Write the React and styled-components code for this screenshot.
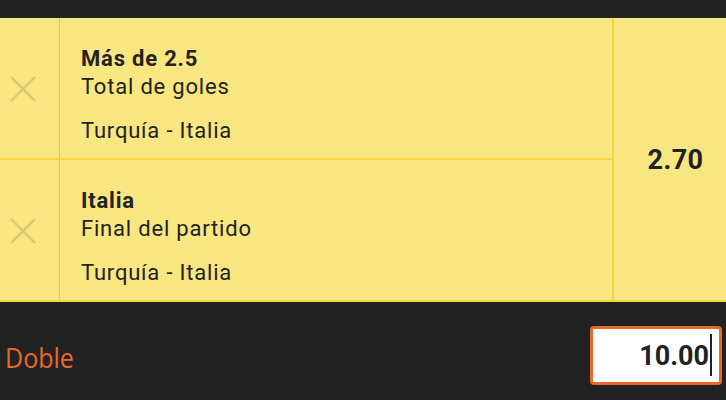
import React from "react";
import styled, { createGlobalStyle } from "styled-components";

const Global = createGlobalStyle`
  html, body { margin: 0; padding: 0; background: #222222; }
  body { font-family: Roboto, "Liberation Sans", sans-serif; }
`;

const Page = styled.div`
  width: 726px;
  height: 400px;
  display: flex;
  flex-direction: column;
  background: #222222;
  overflow: hidden;
`;

const TopBar = styled.div`
  height: 18px;
  flex: none;
  background: #222222;
`;

const Slip = styled.div`
  display: grid;
  grid-template-columns: 612px 2px 1fr;
  background: #f8e681;
  border-bottom: 2px solid #f4d645;
  flex: none;
`;

const Selections = styled.div`
  display: flex;
  flex-direction: column;
`;

const RowDivider = styled.div`
  height: 2px;
  background: #f4d645;
`;

const ColDivider = styled.div`
  background: #f4d645;
`;

const Selection = styled.div`
  height: 140px;
  display: grid;
  grid-template-columns: 59px 1px 1fr;
`;

const RemoveCell = styled.div`
  display: flex;
  align-items: center;
  padding-left: 10px;
  padding-top: 2px;
`;

const Rule = styled.div`
  background: #d9c678;
`;

const Info = styled.div`
  padding: 27px 0 0 21px;
  color: #222222;
  font-size: 22px;
  line-height: 28px;
  letter-spacing: 0.8px;
`;

const Title = styled.div`
  font-weight: 700;
`;

const Market = styled.div`
  font-weight: 400;
`;

const Event = styled.div`
  margin-top: 16px;
  font-weight: 400;
`;

const Odds = styled.div`
  display: flex;
  align-items: center;
  justify-content: center;
  padding: 2px 0 0 11px;
  font-size: 27px;
  font-weight: 700;
  letter-spacing: 0.4px;
  color: #222222;
`;

const Footer = styled.div`
  flex: 1;
  display: flex;
  align-items: center;
  justify-content: space-between;
  padding: 8px 4px 0 5px;
`;

const Label = styled.div`
  font-family: "Open Sans", "Noto Sans", sans-serif;
  font-size: 25px;
  color: #e8692a;
  transform: translateY(2px) scaleY(1.1);
`;

const StakeBox = styled.div`
  box-sizing: border-box;
  width: 132px;
  height: 59px;
  border: 3px solid #e8692a;
  border-radius: 4px;
  background: #ffffff;
  display: flex;
  align-items: center;
  justify-content: flex-end;
  padding-right: 7px;
`;

const StakeValue = styled.span`
  font-size: 27px;
  font-weight: 700;
  color: #222222;
  line-height: 1;
  padding-top: 2px;
`;

const Caret = styled.span`
  display: inline-block;
  width: 2px;
  height: 42px;
  background: #222222;
  margin-left: 1px;
`;

const CloseIcon = () => (
  <svg width="26" height="26" viewBox="0 0 26 26">
    <path d="M1 1 L25 25 M25 1 L1 25" stroke="#d9c678" strokeWidth="2.4" fill="none" />
  </svg>
);

const bets = [
  { title: "Más de 2.5", market: "Total de goles", event: "Turquía - Italia" },
  { title: "Italia", market: "Final del partido", event: "Turquía - Italia" },
];

export default function App() {
  return (
    <Page>
      <Global />
      <TopBar />
      <Slip>
        <Selections>
          {bets.map((b, i) => (
            <React.Fragment key={i}>
              {i > 0 && <RowDivider />}
              <Selection>
                <RemoveCell>
                  <CloseIcon />
                </RemoveCell>
                <Rule />
                <Info>
                  <Title>{b.title}</Title>
                  <Market>{b.market}</Market>
                  <Event>{b.event}</Event>
                </Info>
              </Selection>
            </React.Fragment>
          ))}
        </Selections>
        <ColDivider />
        <Odds>2.70</Odds>
      </Slip>
      <Footer>
        <Label>Doble</Label>
        <StakeBox>
          <StakeValue>10.00</StakeValue>
          <Caret />
        </StakeBox>
      </Footer>
    </Page>
  );
}
